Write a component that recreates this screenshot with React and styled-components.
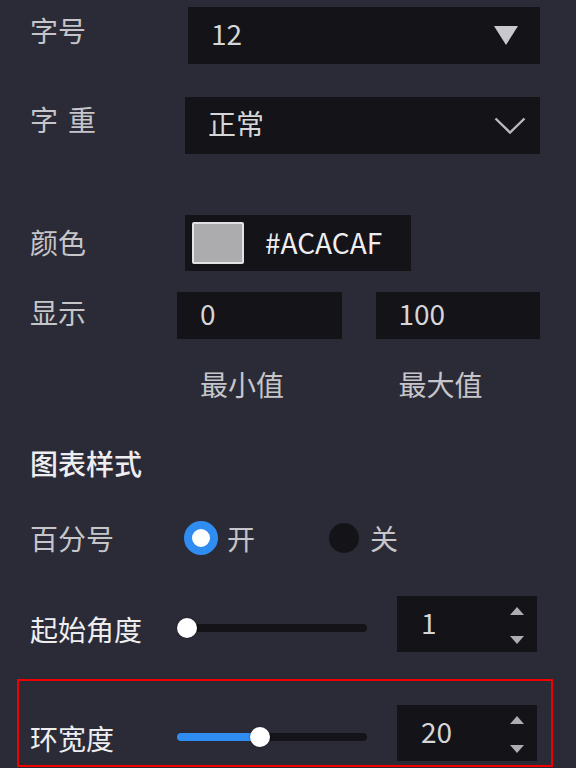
import React from "react";
import styled, { createGlobalStyle } from "styled-components";

const colors = {
  bg: "#2b2b37",
  field: "#131318",
  text: "#c6c6ca",
  value: "#d6d6d9",
  bright: "#eeeef0",
  icon: "#b9b9bd",
  blue: "#2f8cf0",
  highlight: "#f00000",
};

const GlobalStyle = createGlobalStyle`
  html, body {
    margin: 0;
    padding: 0;
    background: ${colors.bg};
  }
  body {
    font-family: "Noto Sans CJK SC", "Noto Sans", sans-serif;
  }
`;

const Panel = styled.div`
  width: 576px;
  height: 768px;
  box-sizing: border-box;
  padding: 7px 36px 0 30px;
  display: flex;
  flex-direction: column;
  background: ${colors.bg};
  overflow: hidden;
`;

const Row = styled.div`
  display: grid;
  grid-template-columns: 147px 1fr;
  align-items: center;
  margin-top: ${(p) => p.$gap || 0}px;
`;

const Label = styled.span`
  font-size: 28px;
  line-height: 28px;
  white-space: nowrap;
  color: ${(p) => (p.$strong ? colors.bright : colors.text)};
  letter-spacing: ${(p) => (p.$spaced ? "10px" : "0")};
  margin-top: ${(p) => (p.$shift > 0 ? p.$shift * 2 : 0)}px;
  margin-bottom: ${(p) => (p.$shift < 0 ? -p.$shift * 2 : 0)}px;
`;

const Value = styled.span`
  margin-bottom: 5px;
`;

const Select = styled.div`
  margin-left: ${(p) => p.$indent || 0}px;
  height: 57px;
  box-sizing: border-box;
  padding: 0 ${(p) => p.$padRight}px 0 23px;
  display: flex;
  align-items: center;
  justify-content: space-between;
  background: ${colors.field};
  font-size: 28px;
  line-height: 28px;
  color: ${colors.value};
`;

const ColorField = styled.div`
  margin-left: 8px;
  width: 226px;
  height: 56px;
  box-sizing: border-box;
  padding-left: 7px;
  display: flex;
  align-items: center;
  gap: 21px;
  background: ${colors.field};
`;

const Swatch = styled.span`
  width: 52px;
  height: 42px;
  box-sizing: border-box;
  border: 2px solid #e2e2e4;
  border-radius: 2px;
  background: ${(p) => p.$color};
`;

const HexText = styled.span`
  font-size: 28px;
  line-height: 28px;
  margin-bottom: 3px;
  color: ${colors.bright};
`;

const RangeGrid = styled.div`
  display: grid;
  grid-template-columns: 1fr 1fr;
  column-gap: 34px;
`;

const InputBox = styled.div`
  height: 47px;
  box-sizing: border-box;
  padding-left: 23px;
  display: flex;
  align-items: center;
  background: ${colors.field};
  font-size: 28px;
  line-height: 28px;
  color: ${colors.value};
`;

const CaptionRow = styled(RangeGrid)`
  margin: 31px 0 0 147px;
`;

const Caption = styled.span`
  padding-left: 23px;
  font-size: 28px;
  line-height: 28px;
  color: ${colors.text};
`;

const SectionTitle = styled.div`
  margin-top: 51px;
  font-size: 28px;
  line-height: 28px;
  font-weight: 500;
  color: ${colors.bright};
`;

const RadioGroup = styled.div`
  margin-left: 7px;
  display: flex;
  align-items: center;
  gap: 72px;
`;

const Option = styled.label`
  display: flex;
  align-items: center;
  gap: 9px;
  font-size: 28px;
  line-height: 28px;
  color: ${colors.text};
`;

const RadioDot = styled.span`
  box-sizing: border-box;
  border-radius: 50%;
  width: ${(p) => (p.$checked ? 34 : 30)}px;
  height: ${(p) => (p.$checked ? 34 : 30)}px;
  margin: ${(p) => (p.$checked ? 0 : 2)}px;
  background: ${(p) => (p.$checked ? "#fff" : colors.field)};
  border: ${(p) => (p.$checked ? `8px solid ${colors.blue}` : "none")};
`;

const SliderLine = styled.div`
  display: flex;
  align-items: center;
  justify-content: space-between;
  padding-right: 3px;
`;

const Track = styled.div`
  position: relative;
  width: 190px;
  height: 8px;
  margin-top: ${(p) => p.$drop || 0}px;
  border-radius: 4px;
  background: ${colors.field};
`;

const Fill = styled.div`
  position: absolute;
  left: 0;
  top: 0;
  bottom: 0;
  border-radius: 4px;
  background: ${colors.blue};
`;

const Knob = styled.div`
  position: absolute;
  top: 50%;
  width: 20px;
  height: 20px;
  border-radius: 50%;
  background: #fff;
  transform: translate(-50%, -50%);
  box-shadow: 0 0 2px rgba(0, 0, 0, 0.5);
`;

const NumberBox = styled.div`
  width: 140px;
  height: 56px;
  box-sizing: border-box;
  padding: 0 13px 0 24px;
  display: flex;
  align-items: center;
  justify-content: space-between;
  background: ${colors.field};
  font-size: 28px;
  line-height: 28px;
  color: ${colors.value};
`;

const Spinner = styled.div`
  display: flex;
  flex-direction: column;
  gap: 21px;
  margin-top: 2px;
`;

const Highlight = styled.div`
  margin: 27px -13px 0;
  border: 2px solid ${colors.highlight};
  padding: 24px 11px 4px;
`;

const TriangleDown = () => (
  <svg width="24" height="19" viewBox="0 0 24 19">
    <polygon points="0,0 24,0 12,19" fill="#c9c9cd" />
  </svg>
);

const Chevron = () => (
  <svg width="32" height="18" viewBox="0 0 32 18">
    <polyline points="1.5,1.5 16,15.5 30.5,1.5" fill="none" stroke={colors.icon} strokeWidth="2.4" />
  </svg>
);

const Arrow = ({ up }) => (
  <svg width="14" height="8" viewBox="0 0 14 8">
    <polygon points={up ? "0,8 14,8 7,0" : "0,0 14,0 7,8"} fill="#aeaeb2" />
  </svg>
);

const Slider = ({ value, min, max, drop }) => {
  const pct = (value - min) / (max - min);
  const pos = `calc(10px + (100% - 20px) * ${pct})`;
  return (
    <Track $drop={drop}>
      {pct > 0.05 && <Fill style={{ width: pos }} />}
      <Knob style={{ left: pos }} />
    </Track>
  );
};

const SliderRow = ({ label, value, gap }) => (
  <Row $gap={gap}>
    <Label $strong $shift={5}>
      {label}
    </Label>
    <SliderLine>
      <Slider value={value} min={1} max={45} drop={7} />
      <NumberBox>
        <Value>{value}</Value>
        <Spinner>
          <Arrow up />
          <Arrow />
        </Spinner>
      </NumberBox>
    </SliderLine>
  </Row>
);

export default function App() {
  return (
    <>
      <GlobalStyle />
      <Panel>
        <Row>
          <Label $shift={-6}>字号</Label>
          <Select $indent={11} $padRight={22}>
            <Value>12</Value>
            <TriangleDown />
          </Select>
        </Row>

        <Row $gap={33}>
          <Label $shift={-7} $spaced>
            字重
          </Label>
          <Select $indent={8} $padRight={14}>
            <Value>正常</Value>
            <Chevron />
          </Select>
        </Row>

        <Row $gap={61}>
          <Label $shift={-1}>颜色</Label>
          <ColorField>
            <Swatch $color="#acacaf" />
            <HexText>#ACACAF</HexText>
          </ColorField>
        </Row>

        <Row $gap={21}>
          <Label $shift={-4}>显示</Label>
          <RangeGrid>
            <InputBox>
              <Value>0</Value>
            </InputBox>
            <InputBox>
              <Value>100</Value>
            </InputBox>
          </RangeGrid>
        </Row>
        <CaptionRow>
          <Caption>最小值</Caption>
          <Caption>最大值</Caption>
        </CaptionRow>

        <SectionTitle>图表样式</SectionTitle>

        <Row $gap={44}>
          <Label>百分号</Label>
          <RadioGroup>
            <Option>
              <RadioDot $checked />开
            </Option>
            <Option>
              <RadioDot />关
            </Option>
          </RadioGroup>
        </Row>

        <SliderRow label="起始角度" value={1} gap={41} />

        <Highlight>
          <SliderRow label="环宽度" value={20} />
        </Highlight>
      </Panel>
    </>
  );
}
